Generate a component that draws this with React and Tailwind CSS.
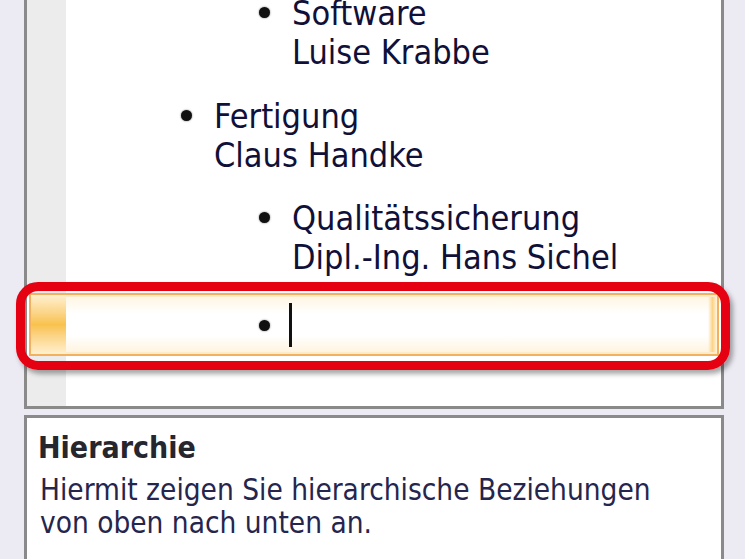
const font = { fontFamily: '"DejaVu Sans Condensed", "DejaVu Sans", Tahoma, sans-serif' }

const items = [
  { level: 3, lines: ['Software', 'Luise Krabbe'], gap: 'pt-0' },
  { level: 2, lines: ['Fertigung', 'Claus Handke'], gap: 'pt-[25px]' },
  { level: 3, lines: ['Qualitätssicherung', 'Dipl.-Ing. Hans Sichel'], gap: 'pt-[24px]' },
]

function Bullet() {
  return <span className="block w-[11px] h-[11px] rounded-full bg-[#111] shrink-0 mt-[13px] shadow-[0_0_2px_rgba(0,0,0,0.6)]" />
}

function Row({ item }) {
  return (
    <div className="flex">
      <div className="w-[39px] shrink-0 bg-[#ececec]" />
      <div className={`flex flex-1 ${item.gap} ${item.level === 2 ? 'pl-[115px]' : 'pl-[193px]'}`}>
        <Bullet />
        <div className="ml-[22px] text-[34px] leading-[39px] text-[#101038]">
          {item.lines.map((l) => (
            <div key={l}>{l}</div>
          ))}
        </div>
      </div>
    </div>
  )
}

export default function App() {
  return (
    <div className="relative w-[745px] h-[559px] overflow-hidden bg-[#ecebf3] pl-[24px] pr-[21px] flex flex-col" style={font}>
      {/* text pane */}
      <div className="h-[409px] shrink-0 border-x-[3px] border-b-[3px] border-[#8a8a8a] bg-white flex flex-col overflow-hidden">
        <div className="flex flex-col mt-[-6px]">
          {items.map((it) => (
            <Row key={it.lines[0]} item={it} />
          ))}
        </div>

        <div className="flex h-[16px]">
          <div className="w-[39px] bg-[#ececec]" />
        </div>

        {/* active row */}
        <div className="mx-[2px] h-[63px] flex border-2 border-[#f3b160] bg-white">
          <div className="w-[35px] shrink-0 bg-gradient-to-b from-[#fff0cf] via-[#f8c24c] to-[#fff0cf]" />
          <div className="flex-1 flex border-y-2 border-[#fdeccb] bg-[linear-gradient(to_bottom,#fff6e4,#ffffff_30%,#ffffff_70%,#fff4df)]">
            <div className="flex flex-1 pl-[193px]">
              <span className="block w-[11px] h-[11px] rounded-full bg-[#111] mt-[23px] shadow-[0_0_2px_rgba(0,0,0,0.6)]" />
              <span className="block w-[3px] h-[44px] bg-[#111] ml-[19px] mt-[6px]" />
            </div>
            <div className="w-[9px] bg-gradient-to-r from-transparent via-[#fbd48a] to-[#fff4dd]" />
          </div>
        </div>

        <div className="flex flex-1">
          <div className="w-[39px] bg-[#ececec]" />
        </div>
      </div>

      {/* description pane */}
      <div className="mt-[6px] flex-1 border-x-[3px] border-t-[3px] border-[#8a8a8a] bg-white pt-[13px]">
        <div className="pl-[11px] text-[30px] leading-[34px] font-bold text-[#26262e]">Hierarchie</div>
        <div className="pl-[13px] mt-[9px] text-[29.5px] leading-[33px] text-[#25254d]">
          <div>Hiermit zeigen Sie hierarchische Beziehungen</div>
          <div>von oben nach unten an.</div>
        </div>
      </div>

      {/* red annotation frame */}
      <div className="absolute left-[16px] top-[282px] w-[714px] h-[88px] rounded-[22px] border-[9px] border-[#e50012] shadow-[3px_4px_5px_rgba(0,0,0,0.35)]" />
    </div>
  )
}
